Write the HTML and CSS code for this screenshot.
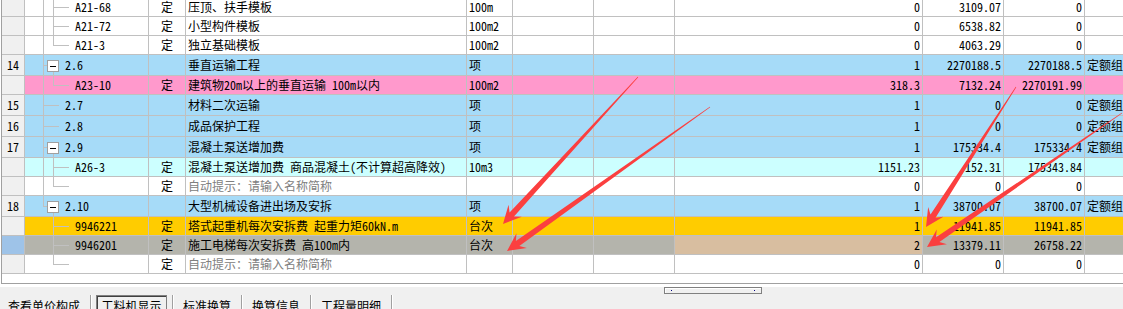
FILE: index.html
```html
<!DOCTYPE html>
<html>
<head>
    <meta charset="utf-8">
    <title>工料机显示</title>
    <link rel="stylesheet" href="styles.css">
</head>
<body>
    <div class="sheet">
        <div class="rows">
            <div class="row item">
                <div class="c-no"></div>
                <div class="c-code"><i class="sp"></i><i class="g pipe w10"></i><i class="g tee w16"></i><span class="tx">A21-68</span></div>
                <div class="c-type">定</div>
                <div class="c-name">压顶、扶手模板</div>
                <div class="c-unit">100m</div>
                <div class="c-e"></div><div class="c-e"></div>
                <div class="c-qty">0</div><div class="c-num">3109.07</div><div class="c-num">0</div><div class="c-last"></div>
            </div>
            <div class="row item">
                <div class="c-no"></div>
                <div class="c-code"><i class="sp"></i><i class="g pipe w10"></i><i class="g tee w16"></i><span class="tx">A21-72</span></div>
                <div class="c-type">定</div>
                <div class="c-name">小型构件模板</div>
                <div class="c-unit">100m2</div>
                <div class="c-e"></div><div class="c-e"></div>
                <div class="c-qty">0</div><div class="c-num">6538.82</div><div class="c-num">0</div><div class="c-last"></div>
            </div>
            <div class="row item">
                <div class="c-no"></div>
                <div class="c-code"><i class="sp"></i><i class="g pipe w10"></i><i class="g elb w16"></i><span class="tx">A21-3</span></div>
                <div class="c-type">定</div>
                <div class="c-name">独立基础模板</div>
                <div class="c-unit">100m2</div>
                <div class="c-e"></div><div class="c-e"></div>
                <div class="c-qty">0</div><div class="c-num">4063.29</div><div class="c-num">0</div><div class="c-last"></div>
            </div>

            <div class="row grp blue">
                <div class="c-no">14</div>
                <div class="c-code"><i class="sp"></i><i class="g tee w4"></i><i class="bx"><b></b></i><span class="tx">2.6</span></div>
                <div class="c-type"></div>
                <div class="c-name">垂直运输工程</div>
                <div class="c-unit">项</div>
                <div class="c-e"></div><div class="c-e"></div>
                <div class="c-qty">1</div><div class="c-num">2270188.5</div><div class="c-num">2270188.5</div><div class="c-last">定额组</div>
            </div>
            <div class="row item pink">
                <div class="c-no"></div>
                <div class="c-code"><i class="sp"></i><i class="g pipe w10"></i><i class="g elb w16"></i><span class="tx">A23-10</span></div>
                <div class="c-type">定</div>
                <div class="c-name">建筑物20m以上的垂直运输 100m以内</div>
                <div class="c-unit">100m2</div>
                <div class="c-e"></div><div class="c-e"></div>
                <div class="c-qty">318.3</div><div class="c-num">7132.24</div><div class="c-num">2270191.99</div><div class="c-last"></div>
            </div>
            <div class="row grp blue">
                <div class="c-no">15</div>
                <div class="c-code"><i class="sp"></i><i class="g tee w16"></i><span class="tx">2.7</span></div>
                <div class="c-type"></div>
                <div class="c-name">材料二次运输</div>
                <div class="c-unit">项</div>
                <div class="c-e"></div><div class="c-e"></div>
                <div class="c-qty">1</div><div class="c-num">0</div><div class="c-num">0</div><div class="c-last">定额组</div>
            </div>
            <div class="row grp blue">
                <div class="c-no">16</div>
                <div class="c-code"><i class="sp"></i><i class="g tee w16"></i><span class="tx">2.8</span></div>
                <div class="c-type"></div>
                <div class="c-name">成品保护工程</div>
                <div class="c-unit">项</div>
                <div class="c-e"></div><div class="c-e"></div>
                <div class="c-qty">1</div><div class="c-num">0</div><div class="c-num">0</div><div class="c-last">定额组</div>
            </div>
            <div class="row grp blue">
                <div class="c-no">17</div>
                <div class="c-code"><i class="sp"></i><i class="g tee w4"></i><i class="bx"><b></b></i><span class="tx">2.9</span></div>
                <div class="c-type"></div>
                <div class="c-name">混凝土泵送增加费</div>
                <div class="c-unit">项</div>
                <div class="c-e"></div><div class="c-e"></div>
                <div class="c-qty">1</div><div class="c-num">175334.4</div><div class="c-num">175334.4</div><div class="c-last">定额组</div>
            </div>
            <div class="row item cyan">
                <div class="c-no"></div>
                <div class="c-code"><i class="sp"></i><i class="g pipe w10"></i><i class="g tee w16"></i><span class="tx">A26-3</span></div>
                <div class="c-type">定</div>
                <div class="c-name">混凝土泵送增加费 商品混凝土(不计算超高降效)</div>
                <div class="c-unit">10m3</div>
                <div class="c-e"></div><div class="c-e"></div>
                <div class="c-qty">1151.23</div><div class="c-num">152.31</div><div class="c-num">175343.84</div><div class="c-last"></div>
            </div>
            <div class="row item">
                <div class="c-no"></div>
                <div class="c-code"><i class="sp"></i><i class="g pipe w10"></i><i class="g elb w16"></i><span class="tx"></span></div>
                <div class="c-type">定</div>
                <div class="c-name hint">自动提示：请输入名称简称</div>
                <div class="c-unit"></div>
                <div class="c-e"></div><div class="c-e"></div>
                <div class="c-qty">0</div><div class="c-num">0</div><div class="c-num">0</div><div class="c-last"></div>
            </div>

            <div class="row grp blue">
                <div class="c-no">18</div>
                <div class="c-code"><i class="sp"></i><i class="g elb w4"></i><i class="bx"><b></b></i><span class="tx">2.10</span></div>
                <div class="c-type"></div>
                <div class="c-name">大型机械设备进出场及安拆</div>
                <div class="c-unit">项</div>
                <div class="c-e"></div><div class="c-e"></div>
                <div class="c-qty">1</div><div class="c-num">38700.07</div><div class="c-num">38700.07</div><div class="c-last">定额组</div>
            </div>
            <div class="row item orange">
                <div class="c-no"></div>
                <div class="c-code"><i class="sp"></i><i class="g w10"></i><i class="g tee w16"></i><span class="tx">9946221</span></div>
                <div class="c-type">定</div>
                <div class="c-name">塔式起重机每次安拆费 起重力矩60kN.m</div>
                <div class="c-unit">台次</div>
                <div class="c-e"></div><div class="c-e"></div>
                <div class="c-qty">1</div><div class="c-num">11941.85</div><div class="c-num">11941.85</div><div class="c-last"></div>
            </div>
            <div class="row item gray">
                <div class="c-no current"></div>
                <div class="c-code"><i class="sp"></i><i class="g w10"></i><i class="g tee w16"></i><span class="tx">9946201</span></div>
                <div class="c-type">定</div>
                <div class="c-name">施工电梯每次安拆费 高100m内</div>
                <div class="c-unit">台次</div>
                <div class="c-e"></div><div class="c-e"></div>
                <div class="c-qty editing">2</div><div class="c-num">13379.11</div><div class="c-num">26758.22</div><div class="c-last"></div>
            </div>
            <div class="row item">
                <div class="c-no"></div>
                <div class="c-code"><i class="sp"></i><i class="g w10"></i><i class="g elb w16"></i><span class="tx"></span></div>
                <div class="c-type">定</div>
                <div class="c-name hint">自动提示：请输入名称简称</div>
                <div class="c-unit"></div>
                <div class="c-e"></div><div class="c-e"></div>
                <div class="c-qty">0</div><div class="c-num">0</div><div class="c-num">0</div><div class="c-last"></div>
            </div>
        </div>
    </div>

    <div class="bottom-bar">
        <div class="splitter"><i></i><i></i></div>
        <div class="tabs">
            <span class="tab first">查看单价构成</span>
            <span class="tab on"><span>工料机显示</span></span>
            <span class="tab">标准换算</span>
            <span class="tab">换算信息</span>
            <span class="tab">工程量明细</span>
        </div>
    </div>

    <!-- annotation arrows drawn over the grid -->
    <svg class="arrows" width="1123" height="309" viewBox="0 0 1123 309">
        <g transform="translate(503 224) rotate(132.56)">
            <polygon points="-199.6,-0.3 -13,-3 -18,-9 0,0 -18,9 -13,3 -199.6,0.3"/>
        </g>
        <g transform="translate(507 251) rotate(144.65)">
            <polygon points="-248.9,-0.3 -13,-3 -18,-9 0,0 -18,9 -13,3 -248.9,0.3"/>
        </g>
        <g transform="translate(926 227) rotate(122.74)">
            <polygon points="-166.4,-0.3 -13,-3 -18,-9 0,0 -18,9 -13,3 -166.4,0.3"/>
        </g>
        <g transform="translate(927 247) rotate(145.51)">
            <polygon points="-236.6,-0.3 -13,-3 -18,-9 0,0 -18,9 -13,3 -236.6,0.3"/>
        </g>
    </svg>
</body>
</html>
```

FILE: styles.css
```css
body {
    margin: 0;
    width: 1123px;
    height: 309px;
    overflow: hidden;
    position: relative;
    background: #fff;
    color: #000;
    font-family: "Noto Sans Mono CJK SC", "Noto Sans CJK SC", monospace;
    font-size: 12px;
}

/* Grid area */
.sheet {
    margin-left: 1px;
    height: 283px;
    border-left: 1px solid #a0a0a0;
    border-bottom: 1px solid #a0a0a0;
    overflow: hidden;
}
.rows {
    margin-top: -2px;
    width: 1163px;
}

.row {
    display: flex;
    height: 19px;
    box-sizing: border-box;
    border-bottom: 1px solid #c0c0c0;
}
.row.grp {
    height: 21px;
}
.row > div {
    flex: none;
    box-sizing: border-box;
    border-right: 1px solid #c0c0c0;
    display: flex;
    align-items: center;
    padding: 0 2px;
    white-space: nowrap;
    overflow: hidden;
    line-height: 18px;
}

.c-no { width: 23px; justify-content: center; background: #f0f0f0; }
.c-no.current { background: #9ec3e8; }
.row > .c-code { width: 124px; padding: 0; align-items: stretch; }
.c-type { width: 37px; justify-content: center; }
.c-name { width: 281px; }
.c-unit { width: 46px; }
.c-e { width: 81px; }
.c-qty { width: 248px; justify-content: flex-end; }
.c-num { width: 81px; justify-content: flex-end; }
.c-last { width: 80px; padding-left: 3px; }

.hint { color: #808080; }

/* Row colours */
.blue > div:not(.c-no) { background: #a6dbf8; }
.pink > div:not(.c-no) { background: #ff99cc; }
.cyan > div:not(.c-no) { background: #ccffff; }
.orange > div:not(.c-no) { background: #ffcc00; }
.gray > div:not(.c-no) { background: #b4b4ac; }
.gray > .c-qty.editing { background: #d8bea0; }

/* Tree guides */
.sp { width: 18px; flex: none; }
.g {
    flex: none;
    display: flex;
    flex-direction: column;
}
.g::before {
    content: "";
    flex: none;
    height: 10px;
    box-sizing: border-box;
}
.grp .g::before { height: 11px; }
.g::after {
    content: "";
    flex: 1;
}
.w4 { width: 4px; }
.w10 { width: 10px; }
.w16 { width: 16px; }
.pipe::before, .pipe::after,
.tee::before, .tee::after,
.elb::before {
    border-left: 1px solid #c0c0c0;
}
.tee::before, .elb::before {
    border-bottom: 1px solid #c0c0c0;
}

.bx {
    flex: none;
    width: 12px;
    display: flex;
    flex-direction: column;
}
.bx::before {
    content: "";
    flex: none;
    height: 5px;
}
.bx::after {
    content: "";
    flex: 1;
    margin-left: 6px;
    border-left: 1px solid #c0c0c0;
}
.bx b {
    flex: none;
    width: 12px;
    height: 12px;
    box-sizing: border-box;
    border: 1px solid #a0a0a0;
    background: #fff;
    display: flex;
    align-items: center;
    justify-content: center;
}
.bx b::after {
    content: "";
    width: 6px;
    height: 1px;
    background: #000;
}
.tx {
    align-self: center;
    margin-left: 6px;
}

/* Bottom panel with tabs */
.bottom-bar {
    height: 25px;
    background: #f0f0f0;
}
.splitter {
    margin-left: 664px;
    width: 98px;
    height: 7px;
    margin-top: 3px;
    box-sizing: border-box;
    border: 1px solid #808080;
    box-shadow: inset 1px 1px 0 #fff;
    display: flex;
    align-items: center;
    justify-content: space-between;
    padding: 0 6px;
}
.splitter i {
    width: 1px;
    height: 1px;
    background: #000080;
}
.tabs {
    display: flex;
    margin-top: 1px;
    height: 20px;
}
.tab {
    padding: 4px 10px 0;
    border-right: 1px solid #a0a0a0;
    box-shadow: 1px 0 0 #fff;
    line-height: 14px;
}
.tab.first { padding-left: 8px; }
.tab.on { padding: 0 5px; }
.tab.on span {
    display: block;
    width: 71px;
    height: 20px;
    box-sizing: border-box;
    border: 1px solid #808080;
    box-shadow: inset 1px 1px 0 #404040;
    padding-top: 3px;
    text-align: center;
}

.arrows {
    position: absolute;
    left: 0;
    top: 0;
    pointer-events: none;
}
.arrows polygon {
    fill: #fb3f3f;
}
```
